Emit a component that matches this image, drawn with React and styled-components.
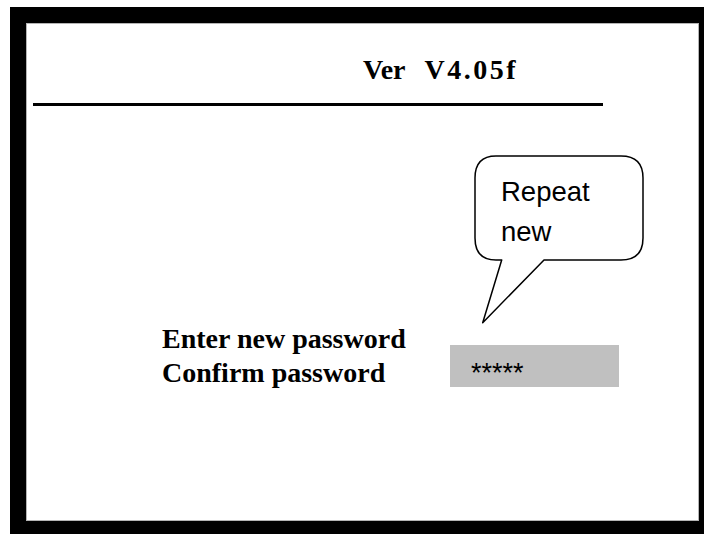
import React from 'react';
import styled, { createGlobalStyle } from 'styled-components';

const GlobalStyle = createGlobalStyle`
  html, body {
    margin: 0;
    padding: 0;
    overflow: hidden;
    background: #fff;
  }
`;

const Frame = styled.div`
  margin: 7px 0 0 10px;
  width: 673px;
  border: 16px solid #000;
`;

const Panel = styled.div`
  position: relative;
  height: 498px;
  background: #fff;
  box-shadow: inset 0 0 0 1px #b4b4b4;
  padding-top: 31px;
  box-sizing: border-box;
`;

const Title = styled.div`
  display: flex;
  gap: 19px;
  padding-left: 337px;
  font-family: "Liberation Serif", "Times New Roman", serif;
  font-weight: bold;
  font-size: 28px;
  line-height: 32px;
  color: #000;
  white-space: nowrap;
`;

const Version = styled.span`
  letter-spacing: 2.5px;
`;

const Rule = styled.div`
  margin: 17px 0 0 7px;
  width: 570px;
  height: 3px;
  background: #000;
`;

const Form = styled.div`
  display: flex;
  align-items: flex-start;
  margin: 216px 0 0 136px;
`;

const Labels = styled.div`
  display: flex;
  flex-direction: column;
  width: 288px;
`;

const Label = styled.div`
  font-family: "Liberation Serif", "Times New Roman", serif;
  font-weight: bold;
  font-size: 28px;
  line-height: 34px;
  color: #000;
  white-space: nowrap;
`;

const PasswordBox = styled.div`
  margin-top: 23px;
  width: 169px;
  height: 42px;
  box-sizing: border-box;
  padding: 15px 0 0 21px;
  background: #c0c0c0;
  font-family: "Liberation Sans", Arial, sans-serif;
  font-size: 27px;
  line-height: 27px;
  color: #000;
`;

const Bubble = styled.div`
  position: absolute;
  left: 448px;
  top: 132px;
  width: 172px;
  height: 170px;

  svg {
    position: absolute;
    left: 0;
    top: 0;
    overflow: visible;
  }
`;

const BubbleText = styled.div`
  position: relative;
  padding: 17px 0 0 27px;
  font-family: "Liberation Sans", Arial, sans-serif;
  font-size: 27.5px;
  line-height: 40px;
  color: #000;
`;

const App = () => {
  return (
    <>
      <GlobalStyle />
      <Frame>
        <Panel>
          <Title>
            <span>Ver</span>
            <Version>V4.05f</Version>
          </Title>
          <Rule />
          <Form>
            <Labels>
              <Label>Enter new password</Label>
              <Label>Confirm password</Label>
            </Labels>
            <PasswordBox>*****</PasswordBox>
          </Form>
          <Bubble>
            <svg width="172" height="170" viewBox="0 0 172 170">
              <path
                d="M 22 1 H 147 Q 169 1 169 23 V 83 Q 169 105 147 105 H 70 L 8.7 167.7 L 27.7 105 H 22 Q 1 105 1 83 V 23 Q 1 1 22 1 Z"
                fill="#fff"
                stroke="#000"
                strokeWidth="1.5"
                strokeLinejoin="round"
              />
            </svg>
            <BubbleText>
              Repeat
              <br />
              new
            </BubbleText>
          </Bubble>
        </Panel>
      </Frame>
    </>
  );
};

export default App;
